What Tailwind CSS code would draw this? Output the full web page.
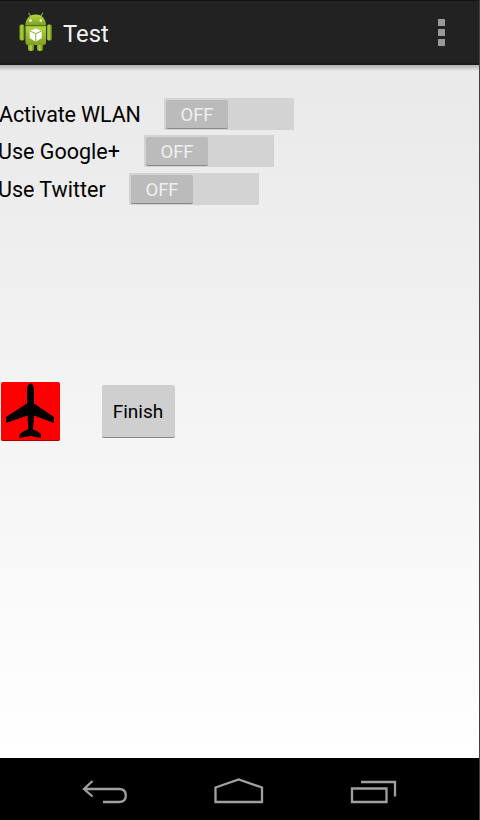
<!DOCTYPE html>
<html lang="en">
<head>
<meta charset="utf-8">
<title>Test</title>
<script src="https://cdn.jsdelivr.net/npm/@tailwindcss/browser@4"></script>
</head>
<body class="bg-[#414141] font-[Roboto,sans-serif]">
<div class="flex h-[820px] w-[479px] flex-col overflow-hidden bg-black">
  <header class="flex h-[65px] shrink-0 items-center border-t border-b-2 border-t-[#111] border-b-[#1a1a1a] bg-[#222] pl-[19px] pr-[34px]">
    <svg class="h-[40px] w-[33px] shrink-0" viewBox="0 0 33 40">
      <defs>
        <linearGradient id="g" x1="0" y1="0" x2="0" y2="1"><stop offset="0" stop-color="#b3d642"/><stop offset="1" stop-color="#7d9f1e"/></linearGradient>
        <linearGradient id="a" x1="0" y1="0" x2="1" y2="0"><stop offset="0" stop-color="#83a522"/><stop offset=".45" stop-color="#aed03f"/><stop offset="1" stop-color="#66861a"/></linearGradient>
      </defs>
      <path d="M9.800 1.200l2.700 4.300M23.700 1.200l-2.700 4.300" stroke="#8fae35" stroke-width="1.200" stroke-linecap="round"/>
      <rect x="9" y="31" width="6" height="8" rx="2.500" fill="url(#a)"/>
      <rect x="18" y="31" width="6" height="8" rx="2.500" fill="url(#a)"/>
      <rect x=".5" y="12.500" width="5" height="16" rx="2" fill="url(#a)"/>
      <rect x="27.800" y="12.500" width="5" height="16" rx="2" fill="url(#a)"/>
      <path d="M6.300 13.500C6.300 7 10.500 2.500 16.700 2.500S27 7 27 13.500Z" fill="url(#g)"/>
      <path d="M6.500 14H27V30.500Q27 33 24.500 33H9Q6.500 33 6.500 30.500Z" fill="url(#g)"/>
      <path d="M6.500 13.800H27" stroke="#5e7c19" stroke-width=".9"/>
      <circle cx="11.500" cy="8.500" r="1.200" fill="#fff"/><circle cx="21.800" cy="8.500" r="1.200" fill="#fff"/>
      <path d="M16.700 16.500L22.700 18.700V26L16.700 29.800L10.700 26V18.700Z" fill="#fff"/>
      <path d="M10.900 19L16.700 21.700L22.500 19M16.700 21.700V29.500" fill="none" stroke="#8aab37" stroke-width="1"/>
    </svg>
    <h1 class="ml-[11px] mt-[4px] text-[23.800px] leading-[30px] text-[#f3f3f3]">Test</h1>
    <div class="ml-auto flex flex-col gap-[3px]">
      <i class="block h-[7px] w-[7px] bg-[#999]"></i>
      <i class="block h-[7px] w-[7px] bg-[#999]"></i>
      <i class="block h-[7px] w-[7px] bg-[#999]"></i>
    </div>
  </header>
  <main class="flex h-[693px] shrink-0 flex-col bg-linear-to-b from-[#e9e9e9] to-white">
    <div class="h-[6px] shrink-0 bg-linear-to-b from-[#b0b0b0] to-[#e9e9e9]"></div>
    <div class="mt-[27px] flex flex-col">
      <div class="flex h-[32px] items-center">
        <span class="-ml-px w-[165px] shrink-0 whitespace-nowrap pt-[2px] text-[21.500px] leading-[32px] tracking-[-0.13px] text-black">Activate WLAN</span>
        <div class="h-[32px] w-[130px] bg-[#d3d3d3] pl-[2px] pt-[2px]"><div class="h-[29px] w-[62px] rounded-[2px] border-b border-[#888] bg-[#bbb] text-center text-[18.500px] leading-[30px] text-[#f0f0f0]">OFF</div></div>
      </div>
      <div class="mt-[5px] flex h-[32px] items-center">
        <span class="-ml-[2px] w-[146px] shrink-0 whitespace-nowrap pt-[2px] text-[21.500px] leading-[32px] text-black">Use Google+</span>
        <div class="h-[32px] w-[130px] bg-[#d3d3d3] pl-[2px] pt-[2px]"><div class="h-[29px] w-[62px] rounded-[2px] border-b border-[#888] bg-[#bbb] text-center text-[18.500px] leading-[30px] text-[#f0f0f0]">OFF</div></div>
      </div>
      <div class="mt-[6px] flex h-[32px] items-center">
        <span class="-ml-[2px] w-[131px] shrink-0 whitespace-nowrap pt-[2px] text-[21.500px] leading-[32px] text-black">Use Twitter</span>
        <div class="h-[32px] w-[130px] bg-[#d3d3d3] pl-[2px] pt-[2px]"><div class="h-[29px] w-[62px] rounded-[2px] border-b border-[#888] bg-[#bbb] text-center text-[18.500px] leading-[30px] text-[#f0f0f0]">OFF</div></div>
      </div>
    </div>
    <div class="mt-[177px] flex items-center pl-px">
      <button class="h-[59px] w-[59px] rounded-[2px] border-b border-[#a00] bg-[#f00]">
        <svg class="block h-[58px] w-[59px]" viewBox="0 0 59 58">
          <path d="M29.500 1.500C31.900 1.500 33 5 33 8V21.500L53 35V41L33 33.500L32 47.500Q39.500 50 40 53V56L29.500 54L18.500 56V53Q19.500 50 27.200 47.500L26.500 33.500L5 41V35L26 21.500V8C26 5 27.200 1.500 29.500 1.500Z" fill="#000"/>
        </svg>
      </button>
      <button class="ml-[42px] h-[53px] w-[73px] rounded-[2px] border-b border-[#888] bg-[#cfcfcf] pr-px pt-[2px] text-[19px] text-black">Finish</button>
    </div>
  </main>
  <nav class="flex h-[62px] shrink-0 items-start pl-[82px] pt-[19px]">
    <svg class="h-[30px] w-[48px]" viewBox="0 0 48 30" fill="none" stroke="#a0a0a0" stroke-width="2.300"><path d="M10.500 4L2 12L10.500 19.500M2.500 12H37Q43.800 12 43.800 18.500T37 25H21"/></svg>
    <svg class="ml-[84px] h-[30px] w-[50px]" viewBox="0 0 50 30" fill="none" stroke="#a0a0a0" stroke-width="2.300"><path d="M1.500 25V10.500L24.700 2.500L48 10.500V25Z"/></svg>
    <svg class="ml-[86px] h-[30px] w-[47px]" viewBox="0 0 47 30" fill="none" stroke="#a0a0a0" stroke-width="2.300"><path d="M2 11.500H36.500V25H2ZM11 5H45V19.500"/></svg>
  </nav>
</div>
</body>
</html>
